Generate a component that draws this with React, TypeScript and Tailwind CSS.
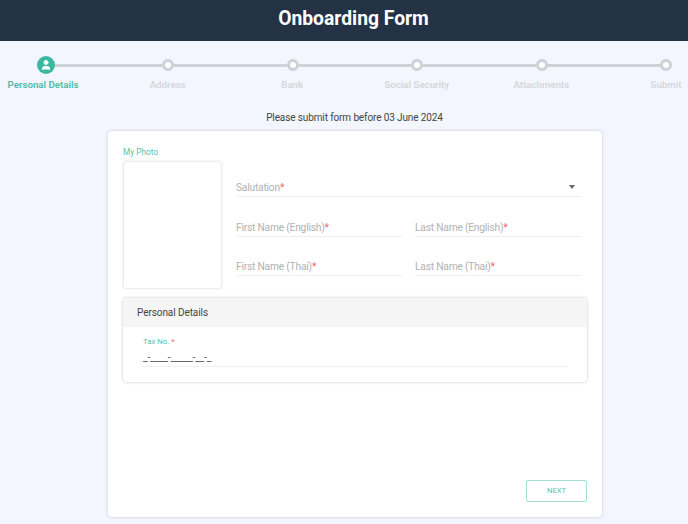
import { User } from 'lucide-react';

const steps = ['Personal Details', 'Address', 'Bank', 'Social Security', 'Attachments', 'Submit'];

function Field({ label, className = '' }: { label: string; className?: string }) {
  return (
    <div className={`h-[25px] border-b border-[#f0f0f0] flex items-end pb-[2px] text-[10.3px] tracking-[-0.24px] leading-[12px] text-[#b2b2b2] ${className}`}>
      <span>{label}<span className="text-[#f06a6a]">*</span></span>
    </div>
  );
}

export default function App() {
  return (
    <div className="h-[524px] w-[688px] overflow-hidden bg-[#f3f6fe] font-['Roboto',sans-serif]">
      {/* Header */}
      <header className="h-[41px] bg-[#243246] flex items-center justify-center pl-[19px]">
        <h1 className="text-[19.3px] font-bold text-white leading-none -mt-[3px]">Onboarding Form</h1>
      </header>

      {/* Stepper */}
      <div className="pt-[15px]">
        <div className="flex items-center pl-[37px] pr-[16px] h-[18px]">
          {steps.map((step, i) => (
            <div key={step} className={`flex items-center ${i === 1 ? 'w-[119px]' : i > 1 ? 'flex-1' : ''}`}>
              {i > 0 && <div className="flex-1 h-[3px] bg-[#cfd1d6]" />}
              {i === 0 ? (
                <div className="w-[18px] h-[18px] rounded-full bg-[#3ab8a0] flex items-center justify-center">
                  <User className="w-3 h-3 text-white" fill="white" strokeWidth={2} />
                </div>
              ) : (
                <div className="w-[12px] h-[12px] rounded-full border-[3px] border-[#cfd1d6] bg-white" />
              )}
            </div>
          ))}
        </div>
        <div className="flex justify-between pl-[43px] pr-[22px] mt-[3px]">
          {steps.map((step, i) => (
            <div key={step} className="w-0 flex justify-center">
              <span className={`whitespace-nowrap text-[9.7px] leading-[16px] font-semibold ${i === 0 ? 'text-[#4bbca4]' : 'text-[#d5d7dc]'}`}>
                {step}
              </span>
            </div>
          ))}
        </div>
      </div>

      <p className="mt-[18px] text-center text-[10px] tracking-[-0.12px] leading-[14px] text-[#444444] pl-[21px]">Please submit form before 03 June 2024</p>

      {/* Card */}
      <div className="ml-[108px] mt-[6px] w-[494px] h-[386px] rounded-[4px] bg-white shadow-[0_0_3px_rgba(0,0,0,0.22)] flex flex-col px-[15px] pt-[15px] pb-[15px]">
        <div className="flex">
          <div className="w-[99px] shrink-0">
            <p className="text-[8.3px] leading-[12px] text-[#5cc2ab] mb-[3px]">My Photo</p>
            <div className="h-[128px] rounded-[4px] bg-white border border-[#eeeeee] shadow-[0_0_2px_rgba(0,0,0,0.12)]" />
          </div>
          <div className="flex-1 pl-[14px] pr-[6px] pt-[26px]">
            <div className="relative">
              <Field label="Salutation" />
              <div className="absolute right-[6px] top-[13px] border-x-[3.5px] border-x-transparent border-t-[4px] border-t-[#666666]" />
            </div>
            <div className="grid grid-cols-2 gap-x-[13px] gap-y-[14px] mt-[15px]">
              <Field label="First Name (English)" />
              <Field label="Last Name (English)" />
              <Field label="First Name (Thai)" />
              <Field label="Last Name (Thai)" />
            </div>
          </div>
        </div>

        {/* Personal details section */}
        <div className="mt-[9px] w-[464px] h-[84px] rounded-[4px] bg-white shadow-[0_0_3px_rgba(0,0,0,0.25)] overflow-hidden">
          <div className="h-[29px] bg-[#f5f5f5] px-[14px] flex items-center text-[10px] tracking-[-0.08px] text-[#444444]">Personal Details</div>
          <div className="pl-[20px] pr-[20px] pt-[10px]">
            <p className="text-[7.8px] leading-[10px] text-[#5cc2ab]">Tax No. <span className="text-[#f06a6a]">*</span></p>
            <div className="h-[20px] pt-[1px] border-b border-[#f0f0f0] text-[10.5px] leading-[20px] text-[#555555] tracking-[-0.3px]">_-____-_____-__-_</div>
          </div>
        </div>

        <div className="mt-auto flex justify-end">
          <button className="w-[61px] h-[22px] rounded-[2px] border border-[#a3dfd0] bg-white text-[7.5px] text-[#5cc2ab]">NEXT</button>
        </div>
      </div>
    </div>
  );
}
